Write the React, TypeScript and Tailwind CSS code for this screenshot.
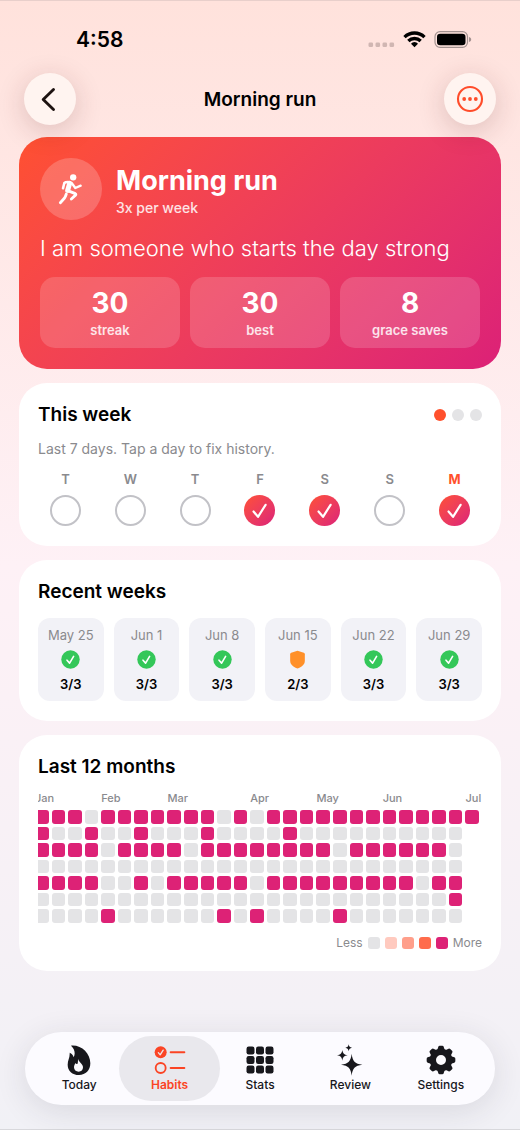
import React from "react";

const heatRows = [
  "111011111110101111111111111",
  "10010010001000010000000000",
  "11110111101111111101111110",
  "00000000000000000000000000",
  "11110010111110111111111011",
  "00000000000000000000000001",
  "00001000000101000010000000",
];

const months = [
  { label: "Jan", place: "col-start-1" },
  { label: "Feb", place: "col-start-5" },
  { label: "Mar", place: "col-start-9" },
  { label: "Apr", place: "col-start-14" },
  { label: "May", place: "col-start-18" },
  { label: "Jun", place: "col-start-22" },
  { label: "Jul", place: "col-start-27" },
];

const days = [
  { letter: "T", name: "Tuesday", done: false },
  { letter: "W", name: "Wednesday", done: false },
  { letter: "T", name: "Thursday", done: false },
  { letter: "F", name: "Friday", done: true },
  { letter: "S", name: "Saturday", done: true },
  { letter: "S", name: "Sunday", done: false },
  { letter: "M", name: "Monday", done: true, today: true },
];

const weeks = [
  { date: "May 25", score: "3/3", met: true },
  { date: "Jun 1", score: "3/3", met: true },
  { date: "Jun 8", score: "3/3", met: true },
  { date: "Jun 15", score: "2/3", met: false },
  { date: "Jun 22", score: "3/3", met: true },
  { date: "Jun 29", score: "3/3", met: true },
];

const stats = [
  { value: "30", label: "streak" },
  { value: "30", label: "best" },
  { value: "8", label: "grace saves" },
];

const legend = ["bg-[#e4e4e6]", "bg-[#ffcabf]", "bg-[#ff9f8b]", "bg-[#ff6c4c]", "bg-[#dd2276]"];

function StatusBar() {
  return (
    <div className="flex h-[72px] items-center justify-between pt-[5px] pr-[48px] pl-[76px]">
      <span className="text-[21px] leading-6 font-semibold">4:58</span>
      <div className="flex items-center gap-2">
        <svg width="27" height="17" viewBox="0 0 27 17" aria-hidden="true">
          <g fill="#d0b6b2">
            <rect x="0.5" y="11.500" width="4.6" height="4.6" rx="1.4" />
            <rect x="7.5" y="11.500" width="4.6" height="4.6" rx="1.4" />
            <rect x="14.5" y="11.500" width="4.6" height="4.6" rx="1.4" />
            <rect x="21.5" y="11.500" width="4.6" height="4.6" rx="1.4" />
          </g>
        </svg>
        <svg width="23" height="17" viewBox="430 90 69 51" aria-hidden="true">
          <g fill="none" stroke="#000" strokeWidth="10">
            <path d="M434.500 108.500a42.500 42.500 0 0 1 60 0" />
            <path d="M446 120a26.500 26.500 0 0 1 37 0" />
          </g>
          <path d="M454 128a14 14 0 0 1 21 0l-10.500 10.500z" fill="#000" />
        </svg>
        <svg width="38" height="17" viewBox="0 0 38 17" aria-hidden="true">
          <rect x="1" y="0.700" width="32.500" height="15.600" rx="5" fill="none" stroke="#a39290" strokeWidth="1.200" />
          <rect x="3" y="2.700" width="28.500" height="11.600" rx="3.300" fill="#000" />
          <path d="M35 6c1.600.5 2.200 1.400 2.200 2.500S36.600 10.500 35 11z" fill="#a39290" />
        </svg>
      </div>
    </div>
  );
}

function Runner() {
  return (
    <svg width="32" height="34" viewBox="137 127 96 102" fill="none" stroke="#fff" strokeLinecap="round" strokeLinejoin="round" aria-hidden="true">
      <circle cx="191.500" cy="143" r="9.500" fill="#fff" stroke="none" />
      <path d="M161 176l4-16c3-3 9-3.500 17-2.500" strokeWidth="7.500" />
      <path d="M181 161l-6 21" strokeWidth="15" />
      <path d="M187 160l11 15 16-7" strokeWidth="7" />
      <path d="M175 183l23 9c2 1 2 3 .5 4.500L186 208" strokeWidth="8.500" />
      <path d="M171 193c-2 6-3 9-6 13l-12 13" strokeWidth="8.500" />
    </svg>
  );
}

function Tick({ className }: { className: string }) {
  return (
    <svg className={className} viewBox="0 0 31 31" fill="none" stroke="#fff" strokeLinecap="round" strokeLinejoin="round" aria-hidden="true">
      <path d="M9.500 16.500l4.500 5.300 7.600-12" strokeWidth="2.200" />
    </svg>
  );
}

function WeekBadge({ met }: { met: boolean }) {
  if (met) {
    return (
      <svg width="19" height="19" viewBox="0 0 19 19" role="img" aria-label="Goal met">
        <circle cx="9.500" cy="9.500" r="9.200" fill="#34c759" />
        <path d="M6 10.200l2.600 2.900 4-6.700" fill="none" stroke="#fff" strokeWidth="1.600" strokeLinecap="round" strokeLinejoin="round" />
      </svg>
    );
  }
  return (
    <svg width="19" height="19" viewBox="85.500 286 57 57" role="img" aria-label="Grace used">
      <path d="M114 288l19 6.500q3 1.200 3 4V318c0 12-10 19-22 23.500C102 337 92 330 92 318v-19.500q0-2.800 3-4z" fill="#ff9029" />
    </svg>
  );
}

function FlameIcon() {
  return (
    <svg width="30" height="30" viewBox="165 101 90 90" aria-hidden="true">
      <path
        fill="#17171c"
        fillRule="evenodd"
        d="M186 103C217 100 244 126 244 156c0 21-14 35-34 35-20 0-34-13-34-31 0-14 7-21 6-36 6 2 10 7 12 14 6-12 3-25-8-35zM207 142c0 8 0 13-2 16-2 1-4-1-5-3-3 4-5 8-5 13 0 8 6 13 14 13s13-5 13-13c0-12-13-15-15-26z"
      />
    </svg>
  );
}

function HabitsIcon() {
  return (
    <svg width="32" height="30" viewBox="430 105 96 90" fill="none" strokeLinecap="round" strokeLinejoin="round" aria-hidden="true">
      <circle cx="450" cy="127" r="18" fill="#fb4424" />
      <path d="M443 128l5.500 6.500 9-14" stroke="#ebe6ea" strokeWidth="4" />
      <circle cx="450" cy="174" r="15" stroke="#fb4424" strokeWidth="5.500" />
      <path d="M480 127h41M480 174h41" stroke="#fb4424" strokeWidth="6" />
    </svg>
  );
}

function StatsIcon() {
  return (
    <svg width="30" height="30" viewBox="0 0 30 30" fill="#17171c" aria-hidden="true">
      {[1.5, 11, 20.500].map((y) =>
        [1.500, 11, 20.500].map((x) => <rect key={`${x}-${y}`} x={x} y={y} width="8" height="8" rx="2.200" />),
      )}
    </svg>
  );
}

function ReviewIcon() {
  return (
    <svg width="30" height="32" viewBox="225 98 90 96" fill="#17171c" aria-hidden="true">
      <path d="M275 127c3 23 9 30 32 33-23 3-29 10-32 33-3-23-9-30-32-33 23-3 29-10 32-33z" />
      <path d="M247 116c2 11 5 14 16 16-11 2-14 5-16 16-2-11-5-14-16-16 11-2 14-5 16-16z" />
      <path d="M266 99c1.300 7 3.500 9.200 10 10.500-6.500 1.300-8.700 3.500-10 10.500-1.300-7-3.500-9.200-10-10.500 6.500-1.300 8.700-3.500 10-10.500z" />
    </svg>
  );
}

function SettingsIcon() {
  return (
    <svg width="30" height="30" viewBox="-45 -45 90 90" aria-hidden="true">
      <g fill="#17171c">
        {[0, 45, 90, 135, 180, 225, 270, 315].map((angle) => (
          <path key={angle} transform={`rotate(${angle})`} d="M-12-28l4-12q1-3 4-3h8q3 0 4 3l4 12z" />
        ))}
      </g>
      <circle r="24.500" fill="none" stroke="#17171c" strokeWidth="19" />
    </svg>
  );
}

const tabs = [
  { label: "Today", icon: FlameIcon },
  { label: "Habits", icon: HabitsIcon, active: true },
  { label: "Stats", icon: StatsIcon },
  { label: "Review", icon: ReviewIcon },
  { label: "Settings", icon: SettingsIcon },
];

function Card({ children }: { children: React.ReactNode }) {
  return <section className="rounded-[28px] bg-white px-[19px] pt-[19px] pb-5">{children}</section>;
}

function CardTitle({ children }: { children: React.ReactNode }) {
  return <h2 className="text-[19px] leading-[25px] font-semibold">{children}</h2>;
}

export default function App() {
  return (
    <div className="flex min-h-screen flex-col border-t border-b border-t-[#e8cfcb] border-b-[#d8d8dc] bg-linear-to-b from-[#ffe2dc] via-[#fef1f6] to-[#f1f1f6] font-['Inter',sans-serif] text-black">
      <StatusBar />

      <header className="relative z-10 flex items-center justify-between px-6">
        <button aria-label="Back" className="flex size-[52px] items-center justify-center rounded-full bg-[#fff4f0] shadow-[0_6px_28px_rgba(90,30,30,0.2)]">
          <svg width="26" height="26" viewBox="0 0 26 26" fill="none" stroke="#1d1210" strokeWidth="2.900" strokeLinecap="round" strokeLinejoin="round" aria-hidden="true">
            <path d="M16.500 3.500L6.200 13.500 16.500 23.500" />
          </svg>
        </button>
        <h1 className="pt-[2px] text-[19px] leading-6 font-semibold">Morning run</h1>
        <button aria-label="More options" className="flex size-[52px] items-center justify-center rounded-full bg-[#fff4f0] shadow-[0_6px_28px_rgba(90,30,30,0.2)]">
          <svg width="28" height="28" viewBox="0 0 28 28" fill="#ff4c2a" aria-hidden="true">
            <circle cx="14" cy="14" r="12" fill="none" stroke="#ff4c2a" strokeWidth="2.100" />
            <circle cx="8.200" cy="14" r="1.900" />
            <circle cx="14" cy="14" r="1.900" />
            <circle cx="19.800" cy="14" r="1.900" />
          </svg>
        </button>
      </header>

      <main className="flex flex-col gap-[14px] px-[19px] pt-3 pb-6">
        <section className="flex flex-col gap-[14px] rounded-[28px] bg-linear-135 from-[#ff5030] to-[#dc2077] p-[21px] text-white">
          <div className="flex items-center gap-[14px]">
            <div className="flex size-[62px] shrink-0 items-center justify-center rounded-full bg-white/20">
              <Runner />
            </div>
            <div className="pt-[6px]">
              <p className="text-[27px] leading-8 font-bold">Morning run</p>
              <p className="text-[14px] leading-[22px] font-medium text-white/85">3x per week</p>
            </div>
          </div>
          <p className="text-[22px] leading-[29px] font-light">I am someone who starts the day strong</p>
          <dl className="grid grid-cols-3 gap-[10px]">
            {stats.map((s) => (
              <div key={s.label} className="flex flex-col-reverse items-center rounded-[15px] bg-white/16 py-[9px]">
                <dt className="text-[13px] leading-[18px] font-semibold text-white/85">{s.label}</dt>
                <dd className="text-[28px] leading-[35px] font-bold">{s.value}</dd>
              </div>
            ))}
          </dl>
        </section>

        <Card>
          <div className="flex items-center justify-between">
            <CardTitle>This week</CardTitle>
            <div className="flex gap-[6px]" aria-hidden="true">
              <span className="size-3 rounded-full bg-[#ff502c]" />
              <span className="size-3 rounded-full bg-[#e4e4e6]" />
              <span className="size-3 rounded-full bg-[#e4e4e6]" />
            </div>
          </div>
          <p className="mt-3 text-[14px] leading-5 text-[#8a8a8e]">Last 7 days. Tap a day to fix history.</p>
          <div className="mt-[11px] grid grid-cols-7 gap-[10px]">
            {days.map((d) => (
              <div key={d.name} className="flex flex-col items-center gap-[7px]">
                <span className={d.today ? "text-[13px] leading-[18px] font-bold text-[#ff502c]" : "text-[13px] leading-[18px] font-semibold text-[#8a8a8e]"}>
                  {d.letter}
                </span>
                <button
                  aria-label={d.name}
                  aria-pressed={d.done}
                  className={
                    d.done
                      ? "size-[31px] rounded-full bg-linear-135 from-[#ff5030] to-[#dc2077]"
                      : "size-[31px] rounded-full border-2 border-[#c2c2c7]"
                  }
                >
                  {d.done && <Tick className="size-full" />}
                </button>
              </div>
            ))}
          </div>
        </Card>

        <Card>
          <CardTitle>Recent weeks</CardTitle>
          <ul className="mt-[14px] grid grid-cols-6 gap-[10px]">
            {weeks.map((w) => (
              <li key={w.date} className="flex flex-col items-center gap-[6px] rounded-xl bg-[#f2f2f7] py-2">
                <span className="text-[13px] leading-[18px] text-[#8a8a8e]">{w.date}</span>
                <WeekBadge met={w.met} />
                <span className="text-[13px] leading-[18px] font-semibold">{w.score}</span>
              </li>
            ))}
          </ul>
        </Card>

        <Card>
          <CardTitle>Last 12 months</CardTitle>
          <div className="mt-3 overflow-hidden">
            <div className="mr-[3px] -ml-[3px]">
              <div className="grid grid-cols-[repeat(27,minmax(0,1fr))] gap-[3px]">
                {months.map((m) => (
                  <span key={m.label} className={`row-start-1 text-[11px] leading-[14px] font-medium whitespace-nowrap text-[#8a8a8e] ${m.place}`}>
                    {m.label}
                  </span>
                ))}
              </div>
              <div className="mt-[5px] flex flex-col gap-[3px]">
                {heatRows.map((row, r) => (
                  <div key={r} className="grid grid-cols-[repeat(27,minmax(0,1fr))] gap-[3px]">
                    {row.split("").map((cell, c) => (
                      <span key={c} className={cell === "1" ? "aspect-square rounded-[3px] bg-[#dd2276]" : "aspect-square rounded-[3px] bg-[#e4e4e6]"} />
                    ))}
                  </div>
                ))}
              </div>
            </div>
          </div>
          <div className="mt-3 flex items-center justify-end gap-[5px] text-[12px] leading-4 text-[#8a8a8e]">
            <span>Less</span>
            {legend.map((tone) => (
              <span key={tone} className={`size-3 rounded-[3px] ${tone}`} />
            ))}
            <span>More</span>
          </div>
        </Card>
      </main>

      <nav aria-label="Main" className="mx-[25px] mt-auto mb-6 flex rounded-full bg-[#fcfbff] px-[9px] py-1 shadow-[0_6px_32px_rgba(40,40,60,0.12)]">
        {tabs.map(({ label, icon: Icon, active }) => (
          <button
            key={label}
            aria-current={active ? "page" : undefined}
            className={
              active
                ? "-mx-[5px] flex flex-1 flex-col items-center rounded-full bg-[#e9e8ed] pt-2 pb-[7px] text-[#fb4424]"
                : "-mx-[5px] flex flex-1 flex-col items-center rounded-full pt-2 pb-[7px] text-[#17171c]"
            }
          >
            <span className="flex h-8 items-center">
              <Icon />
            </span>
            <span className={active ? "text-[12px] leading-[18px] font-semibold" : "text-[12px] leading-[18px] font-medium"}>{label}</span>
          </button>
        ))}
      </nav>
    </div>
  );
}
